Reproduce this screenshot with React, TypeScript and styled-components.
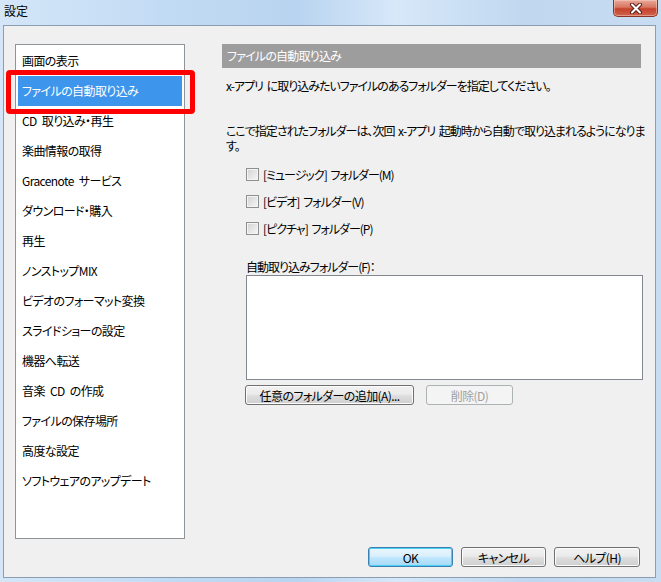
import React, { FC } from 'react';
import styled, { createGlobalStyle } from 'styled-components';

const GlobalStyle = createGlobalStyle`
  html, body {
    margin: 0;
    padding: 0;
    background: #ffffff;
  }
  body {
    font-family: "Noto Sans CJK JP", "Liberation Sans", sans-serif;
    font-size: 12px;
    color: #000;
  }
`;

const Window = styled.div`
  width: 661px;
  height: 582px;
  box-sizing: border-box;
  display: flex;
  flex-direction: column;
  background: linear-gradient(90deg, #d4e6f8 0%, #c2dbf4 25%, #b9d4f0 45%, #d7e8f9 60%, #bfd7ef 80%, #c9ddf1 100%);
  padding: 0 5px 4px 3px;
`;

const TitleBar = styled.div`
  height: 25px;
  display: flex;
  align-items: flex-start;
  justify-content: space-between;
`;

const Title = styled.span`
  padding: 3px 0 0 1px;
  font-size: 12px;
  line-height: 15px;
  font-feature-settings: "palt";
`;

const CloseButton = styled.div`
  width: 45px;
  height: 17px;
  margin-right: -2px;
  box-sizing: border-box;
  border: 1px solid #8a3428;
  border-top: none;
  border-radius: 0 0 5px 5px;
  background: linear-gradient(180deg, #e9a899 0%, #d87561 45%, #c4422c 55%, #d0634c 100%);
  box-shadow: inset 0 0 0 1px rgba(255, 220, 210, 0.45);
  display: flex;
  align-items: center;
  justify-content: center;
`;

const Client = styled.div`
  flex: 1;
  display: flex;
  flex-direction: column;
  background: #f0f0f0;
  border: 1px solid #8b9db0;
`;

const Body = styled.div`
  display: flex;
  padding: 18px 12px 0 11px;
`;

const Sidebar = styled.div`
  position: relative;
  width: 170px;
  height: 495px;
  box-sizing: border-box;
  border: 1px solid #8f9499;
  background: #ffffff;
  padding: 1px 2px 0;
  display: flex;
  flex-direction: column;
`;

const NavItem = styled.div<{ $selected?: boolean }>`
  position: relative;
  height: 30px;
  line-height: 30px;
  padding-left: 4px;
  white-space: nowrap;
  letter-spacing: -0.6px;
  word-spacing: 3px;
  font-feature-settings: "palt";
  color: ${p => (p.$selected ? '#ffffff' : '#000000')};
  background: ${p => (p.$selected ? '#3d95ec' : 'transparent')};
`;

const Highlight = styled.div`
  position: absolute;
  left: -12px;
  right: -13px;
  top: -6px;
  bottom: -8px;
  border: 5px solid #ff0000;
  border-radius: 4px;
  pointer-events: none;
`;

const Content = styled.div`
  flex: 1;
  margin-left: 37px;
  display: flex;
  flex-direction: column;
  font-feature-settings: "palt";
  letter-spacing: -1px;
  word-spacing: 2px;
  line-height: 15px;
`;

const SectionHeader = styled.div`
  height: 24px;
  margin-right: 2px;
  padding-left: 5px;
  background: #9d9d9d;
  color: #ffffff;
  letter-spacing: -0.8px;
  line-height: 24px;
`;

const Paragraph = styled.div<{ $gap: number }>`
  margin-top: ${p => p.$gap}px;
  margin-right: -6px;
  padding-left: 4px;
`;

const Options = styled.div`
  margin-top: 8px;
  padding-left: 24px;
  display: flex;
  flex-direction: column;
`;

const CheckRow = styled.label`
  height: 27px;
  display: flex;
  align-items: center;
  gap: 4px;
`;

const CheckBox = styled.span`
  width: 13px;
  height: 13px;
  box-sizing: border-box;
  border: 1px solid #8e8f8f;
  background: linear-gradient(135deg, #d2d2d2 0%, #e8e8e8 60%, #f6f6f6 100%);
  box-shadow: inset 0 0 0 1px #f4f4f4;
`;

const FieldLabel = styled.div`
  margin-top: 17px;
  padding-left: 24px;
`;

const FolderList = styled.div`
  margin: 1px 0 0 24px;
  height: 105px;
  box-sizing: border-box;
  border: 1px solid #828790;
  background: #ffffff;
`;

const ButtonRow = styled.div`
  margin: 5px 0 0 23px;
  display: flex;
  gap: 12px;
`;

const Button = styled.div<{ $width: number; $disabled?: boolean; $default?: boolean }>`
  width: ${p => p.$width}px;
  height: 20px;
  box-sizing: border-box;
  border-radius: 3px;
  display: flex;
  align-items: center;
  justify-content: center;
  font-feature-settings: "palt";
  letter-spacing: -0.6px;
  white-space: nowrap;
  border: 1px solid ${p => (p.$default ? '#3c7fb1' : p.$disabled ? '#adb2b5' : '#707070')};
  color: ${p => (p.$disabled ? '#a0a0a0' : '#000000')};
  background: ${p =>
    p.$disabled
      ? '#f4f4f4'
      : p.$default
      ? 'linear-gradient(180deg, #eaf6fd 0%, #d9f0fc 45%, #bee6fd 55%, #a7d9f5 100%)'
      : 'linear-gradient(180deg, #f2f2f2 0%, #ebebeb 45%, #dddddd 55%, #cfcfcf 100%)'};
  box-shadow: ${p => (p.$default ? 'inset 0 0 0 1px #48d0f6' : p.$disabled ? 'none' : 'inset 0 0 0 1px #fcfcfc')};
`;

const Footer = styled.div`
  flex: 1;
  display: flex;
  justify-content: flex-end;
  align-items: flex-end;
  gap: 8px;
  padding: 0 15px 10px 0;
`;

const navItems = [
  '画面の表示',
  'ファイルの自動取り込み',
  'CD 取り込み・再生',
  '楽曲情報の取得',
  'Gracenote サービス',
  'ダウンロード・購入',
  '再生',
  'ノンストップMIX',
  'ビデオのフォーマット変換',
  'スライドショーの設定',
  '機器へ転送',
  '音楽 CD の作成',
  'ファイルの保存場所',
  '高度な設定',
  'ソフトウェアのアップデート',
];

const folders = ['[ミュージック] フォルダー(M)', '[ビデオ] フォルダー(V)', '[ピクチャ] フォルダー(P)'];

const CloseIcon: FC = () => (
  <svg width="14" height="11" viewBox="0 0 14 11">
    <path d="M3 1.5 L11 9.5 M11 1.5 L3 9.5" stroke="#5a1f18" strokeWidth="4" strokeLinecap="round" />
    <path d="M3 1.5 L11 9.5 M11 1.5 L3 9.5" stroke="#ffffff" strokeWidth="2" strokeLinecap="round" />
  </svg>
);

const App: FC = () => {
  return (
    <>
      <GlobalStyle />
      <Window>
        <TitleBar>
          <Title>設定</Title>
          <CloseButton>
            <CloseIcon />
          </CloseButton>
        </TitleBar>
        <Client>
          <Body>
            <Sidebar>
              {navItems.map((item, i) => (
                <NavItem key={item} $selected={i === 1}>
                  {item}
                  {i === 1 && <Highlight />}
                </NavItem>
              ))}
            </Sidebar>
            <Content>
              <SectionHeader>ファイルの自動取り込み</SectionHeader>
              <Paragraph $gap={10}>x-アプリ に取り込みたいファイルのあるフォルダーを指定してください。</Paragraph>
              <Paragraph $gap={30}>
                ここで指定されたフォルダーは、次回 x-アプリ 起動時から自動で取り込まれるようになります。
              </Paragraph>
              <Options>
                {folders.map(f => (
                  <CheckRow key={f}>
                    <CheckBox />
                    {f}
                  </CheckRow>
                ))}
              </Options>
              <FieldLabel>自動取り込みフォルダー(F)：</FieldLabel>
              <FolderList />
              <ButtonRow>
                <Button $width={169}>任意のフォルダーの追加(A)...</Button>
                <Button $width={87} $disabled>
                  削除(D)
                </Button>
              </ButtonRow>
            </Content>
          </Body>
          <Footer>
            <Button $width={85} $default>
              OK
            </Button>
            <Button $width={85}>キャンセル</Button>
            <Button $width={86}>ヘルプ(H)</Button>
          </Footer>
        </Client>
      </Window>
    </>
  );
};

export default App;
